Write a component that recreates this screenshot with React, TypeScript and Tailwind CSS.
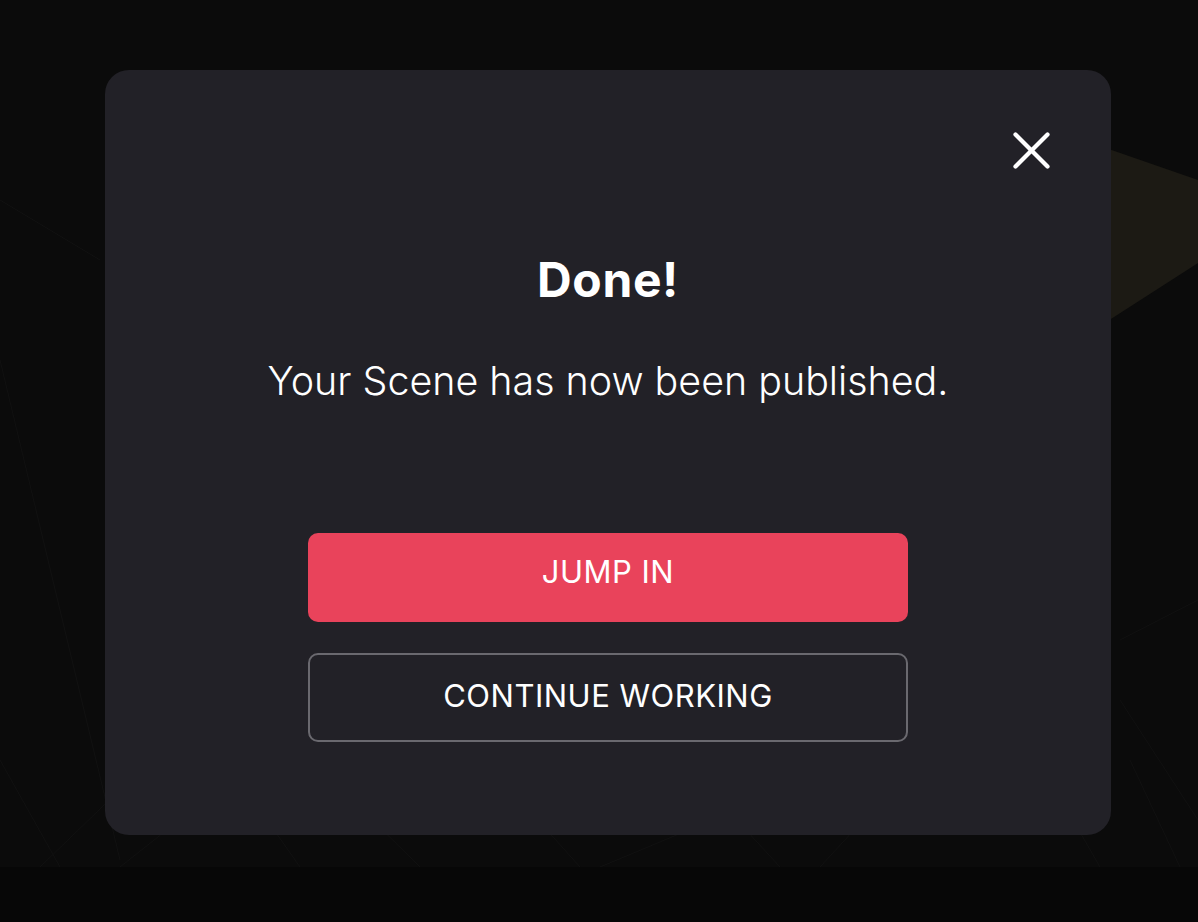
import React from 'react';

const CloseIcon: React.FC = () => (
  <svg width="37" height="37" viewBox="0 0 37 37" fill="none" stroke="white" strokeWidth="4.2" strokeLinecap="round">
    <path d="M2.5 2.5L34.5 34.5" />
    <path d="M34.5 2.5L2.5 34.5" />
  </svg>
);

const Backdrop: React.FC = () => (
  <svg className="absolute inset-0" width="1198" height="867" viewBox="0 0 1198 867" fill="none">
    <polygon points="1100,146 1198,180 1198,263 1100,326" fill="#1c1a14" />
    <g stroke="#111111" strokeWidth="1">
      <path d="M0 360L120 860" />
      <path d="M0 760L60 867" />
      <path d="M40 867L130 780" />
      <path d="M120 867L230 780" />
      <path d="M300 867L260 810" />
      <path d="M420 867L150 600" />
      <path d="M580 867L520 800" />
      <path d="M600 867L1000 700" />
      <path d="M780 867L700 780" />
      <path d="M820 867L900 780" />
      <path d="M1100 867L1050 780" />
      <path d="M1180 867L1130 760" />
      <path d="M1198 820L1120 700" />
      <path d="M1198 600L1120 640" />
      <path d="M0 200L100 260" />
    </g>
  </svg>
);

const App: React.FC = () => {
  return (
    <div className="w-[1198px] h-[922px] bg-[#070707] overflow-hidden font-['Inter','Noto_Sans',sans-serif]">
      <div className="relative h-[867px] bg-[#0b0b0b] pt-[70px] pl-[105px]">
        <Backdrop />
        <div className="relative w-[1006px] h-[765px] rounded-[24px] bg-[#222127] flex flex-col items-center pt-[181px]">
          <button className="absolute top-[62px] right-[61px]" aria-label="Close">
            <CloseIcon />
          </button>

          <h1 className="text-[48px] leading-[58px] font-bold text-white tracking-[0.6px]">Done!</h1>
          <p className="mt-[48px] text-[39.4px] leading-[48px] font-light text-white">
            Your Scene has now been published.
          </p>

          <div className="mt-[128px] flex flex-col gap-[31px] w-[600px]">
            <button className="h-[89px] pb-[10px] rounded-[10px] bg-[#e9435b] text-white text-[31px] font-normal tracking-[0.5px]">
              JUMP IN
            </button>
            <button className="h-[89px] pb-[3px] rounded-[10px] border-2 border-[#6a696f] text-white text-[31px] font-normal tracking-[0.5px]">
              CONTINUE WORKING
            </button>
          </div>
        </div>
      </div>
    </div>
  );
};

export default App;
